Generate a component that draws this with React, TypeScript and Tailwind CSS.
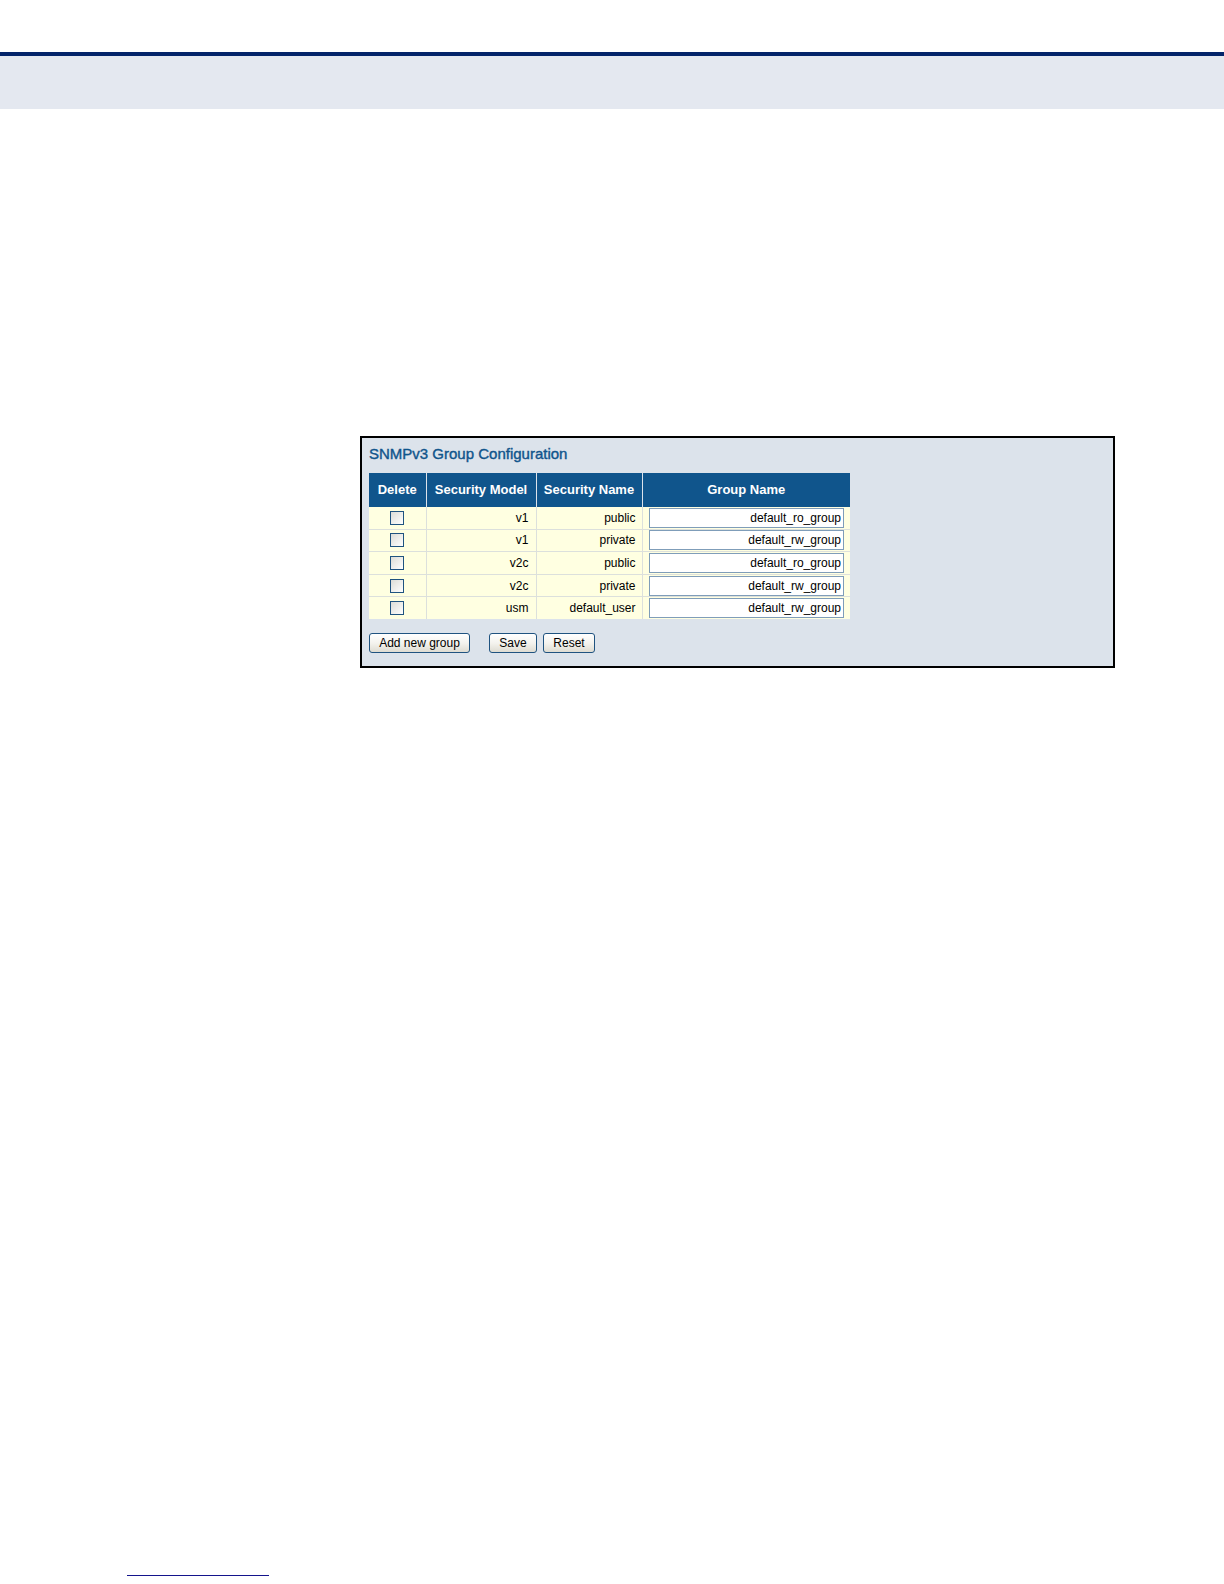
import { useState } from "react";

type Group = {
    id: number;
    model: string;
    securityName: string;
    groupName: string;
    remove: boolean;
};

const initialGroups: Group[] = [
    { id: 1, model: "v1", securityName: "public", groupName: "default_ro_group", remove: false },
    { id: 2, model: "v1", securityName: "private", groupName: "default_rw_group", remove: false },
    { id: 3, model: "v2c", securityName: "public", groupName: "default_ro_group", remove: false },
    { id: 4, model: "v2c", securityName: "private", groupName: "default_rw_group", remove: false },
    { id: 5, model: "usm", securityName: "default_user", groupName: "default_rw_group", remove: false },
];

const buttonClass =
    "h-5 rounded-[3px] border border-[#1f5380] bg-linear-to-b from-white via-[#f4f3ee] to-[#dedcd2] text-xs leading-4 text-black";

export default function App() {
    const [groups, setGroups] = useState<Group[]>(initialGroups);

    const updateGroup = (id: number, change: Partial<Group>) => {
        setGroups(groups.map((g) => (g.id === id ? { ...g, ...change } : g)));
    };

    const handleAdd = () => {
        const id = Math.max(0, ...groups.map((g) => g.id)) + 1;
        setGroups([
            ...groups,
            { id, model: "v1", securityName: "public", groupName: "", remove: false },
        ]);
    };

    const handleSave = (e: React.FormEvent) => {
        e.preventDefault();
        setGroups(groups.filter((g) => !g.remove));
    };

    return (
        <div className="flex min-h-screen flex-col bg-white font-['Liberation_Sans',Arial,sans-serif] text-black">
            <header className="mt-13 h-[57px] border-t-4 border-[#03246a] bg-[#e4e8f0]" />

            <main className="mt-[327px] pr-[109px] pl-[360px]">
                <form
                    onSubmit={handleSave}
                    onReset={() => setGroups(initialGroups)}
                    className="border-2 border-black bg-[#dce3eb] px-[7px] pt-1 pb-[13px]"
                >
                    <h1 className="mb-[7px] text-[15px] leading-6 font-normal text-[#10558c] [-webkit-text-stroke:0.4px]">
                        SNMPv3 Group Configuration
                    </h1>

                    <table className="h-[146px] w-[481px] table-fixed border-collapse text-xs">
                        <colgroup>
                            <col className="w-[57px]" />
                            <col className="w-[110px]" />
                            <col className="w-[106px]" />
                            <col />
                        </colgroup>
                        <thead>
                            <tr className="h-[34px] bg-[#10558c] text-[13px] text-white">
                                <th className="border-r border-[#dce3eb] p-0">Delete</th>
                                <th className="border-r border-[#dce3eb] p-0">Security Model</th>
                                <th className="border-r border-[#dce3eb] p-0">Security Name</th>
                                <th className="p-0">Group Name</th>
                            </tr>
                        </thead>
                        <tbody>
                            {groups.map((g) => (
                                <tr
                                    key={g.id}
                                    className="border-b border-[#dce0dc] bg-[#ffffe1] last:border-b-0"
                                >
                                    <td className="border-r border-[#dce0dc] p-0">
                                        <input
                                            type="checkbox"
                                            aria-label={`Delete ${g.model} ${g.securityName}`}
                                            checked={g.remove}
                                            onChange={(e) => updateGroup(g.id, { remove: e.target.checked })}
                                            className="mx-auto block size-[14px] appearance-none border border-[#1f5380] bg-linear-to-br from-[#dcdcd7] to-white checked:bg-[#1f5380] checked:from-[#1f5380]"
                                        />
                                    </td>
                                    <td className="border-r border-[#dce0dc] py-0 pr-[7px] text-right">
                                        {g.model}
                                    </td>
                                    <td className="border-r border-[#dce0dc] py-0 pr-[6px] text-right">
                                        {g.securityName}
                                    </td>
                                    <td className="px-[6px] py-0">
                                        <input
                                            type="text"
                                            aria-label={`Group name for ${g.model} ${g.securityName}`}
                                            value={g.groupName}
                                            onChange={(e) => updateGroup(g.id, { groupName: e.target.value })}
                                            className="block h-5 w-full border border-[#7f9db9] bg-white px-[2px] text-right text-xs"
                                        />
                                    </td>
                                </tr>
                            ))}
                        </tbody>
                    </table>

                    <div className="mt-[14px] flex">
                        <button type="button" onClick={handleAdd} className={`${buttonClass} w-[101px]`}>
                            Add new group
                        </button>
                        <button type="submit" className={`${buttonClass} ml-[19px] w-12`}>
                            Save
                        </button>
                        <button type="reset" className={`${buttonClass} ml-[6px] w-[52px]`}>
                            Reset
                        </button>
                    </div>
                </form>
            </main>

            <footer className="mt-auto pb-2 pl-[127px]">
                <div className="w-[142px] border-b border-[#14148c]" />
            </footer>
        </div>
    );
}
